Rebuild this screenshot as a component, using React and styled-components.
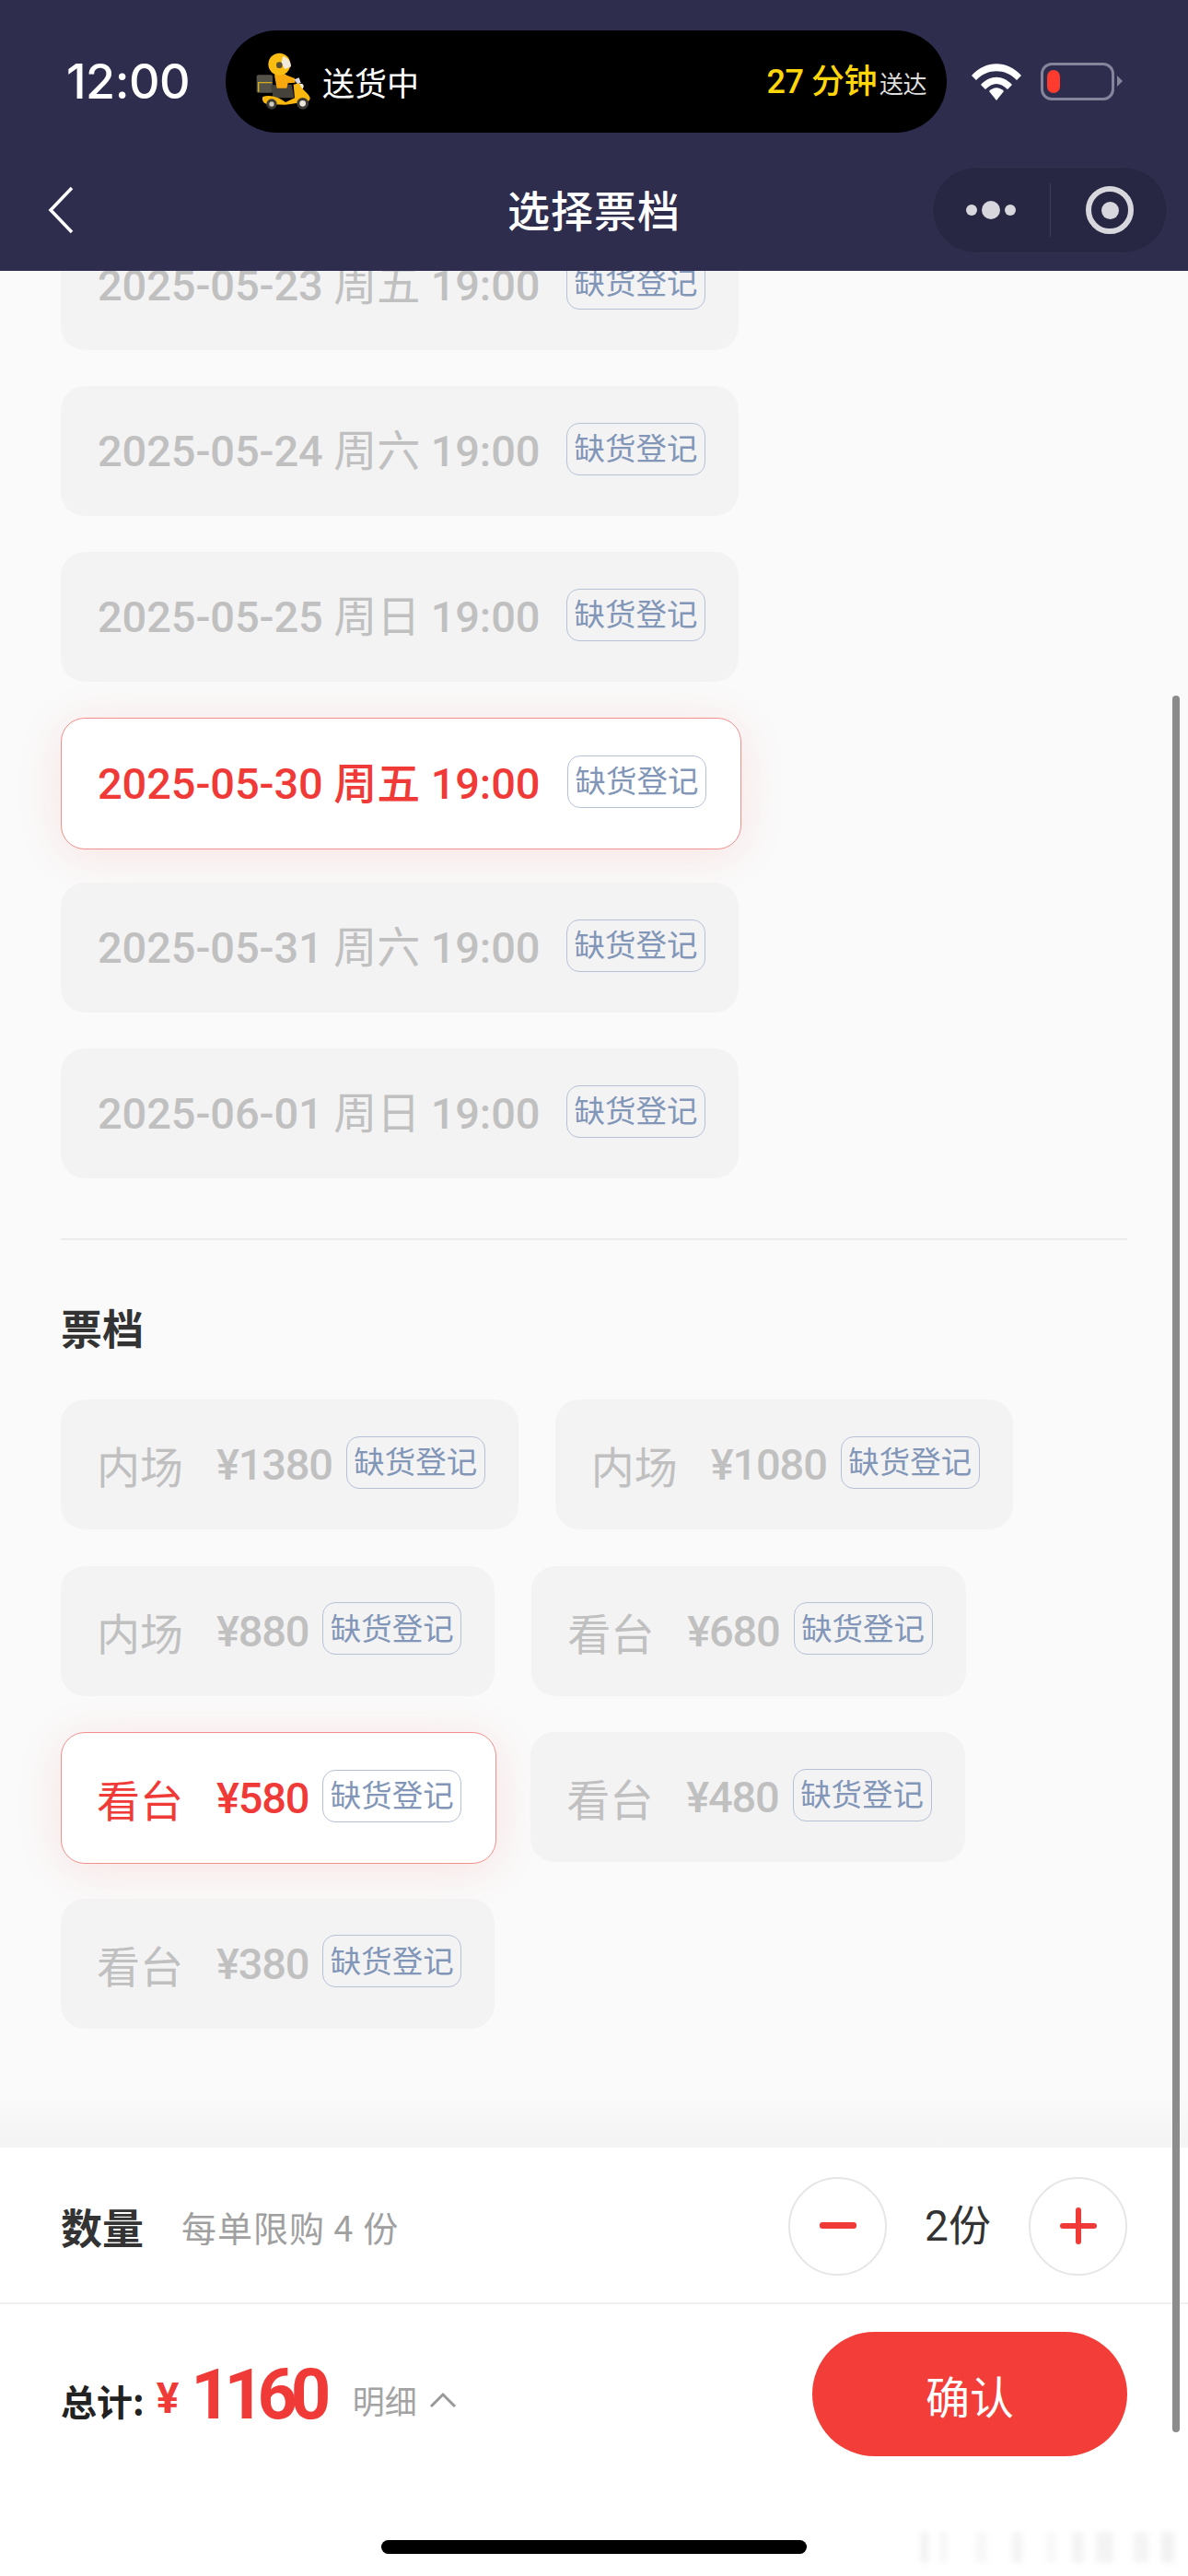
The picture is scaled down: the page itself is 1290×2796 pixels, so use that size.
import React from "react";
import styled, { createGlobalStyle } from "styled-components";

const RED = "#f03a37";

const dates = [
  { date: "2025-05-23", day: "周五" },
  { date: "2025-05-24", day: "周六" },
  { date: "2025-05-25", day: "周日" },
  { date: "2025-05-30", day: "周五", active: true },
  { date: "2025-05-31", day: "周六" },
  { date: "2025-06-01", day: "周日" },
];

const tickets = [
  { area: "内场", price: "¥1380" },
  { area: "内场", price: "¥1080" },
  { area: "内场", price: "¥880" },
  { area: "看台", price: "¥680" },
  { area: "看台", price: "¥580", active: true },
  { area: "看台", price: "¥480" },
  { area: "看台", price: "¥380" },
];

// traced at 3x of the 80px crop, so the viewBox is 240
const Scooter = () => (
  <svg width="80" height="80" viewBox="0 0 240 240">
    <rect x="26" y="97" width="52" height="58" rx="5" fill="#55524a" />
    <path d="M30 122 H76 M32 124 V152" stroke="#d4b01c" strokeWidth="4" fill="none" />
    <path d="M72 130 L140 128 L148 172 L80 172 Z" fill="#45423c" />
    <path d="M84 98 C92 88 116 88 124 98 L150 108 L152 122 L128 124 L124 140 L92 140 Z" fill="#f6a80e" />
    <circle cx="100" cy="62" r="36" fill="#fabd12" />
    <path d="M112 36 C128 42 138 54 138 70 L118 78 L106 58 Z" fill="#f2ebdc" />
    <circle cx="100" cy="65" r="10" fill="#5a5030" />
    <path d="M148 112 L164 106 L170 122 L160 128 Z" fill="#d8d6e0" />
    <circle cx="170" cy="134" r="9" fill="#eeeae0" />
    <path d="M46 168 C70 160 100 170 120 186 L150 172 L146 128 L164 124 C176 150 196 156 200 172 C200 186 186 186 160 188 L120 194 L60 192 C48 190 42 178 46 168 Z" fill="#fab80e" />
    <circle cx="75" cy="192" r="17" fill="#3e3b34" />
    <circle cx="75" cy="192" r="8" fill="#cfcabd" />
    <circle cx="176" cy="190" r="19" fill="#3e3b34" />
    <circle cx="176" cy="190" r="10" fill="#ebe7dc" />
  </svg>
);

const App = () => (
  <Page>
    <GlobalStyle />
    <Header>
      <StatusBar>
        <Clock>12:00</Clock>
        <Island>
          <Scooter />
          <IslandText>送货中</IslandText>
          <Eta>
            27 分钟<small>送达</small>
          </Eta>
        </Island>
        <svg width="56" height="42" viewBox="0 0 56 42">
          <path d="M1 14 C16 -3 40 -3 55 14 L50 19 C38 6 18 6 6 19 Z" fill="#fff" />
          <path d="M11 24 C21 13 35 13 45 24 L40 29 C32 21 24 21 16 29 Z" fill="#fff" />
          <path d="M20 31 C25 26 31 26 36 31 L28 41 Z" fill="#fff" />
        </svg>
        <Battery>
          <BatteryFill />
        </Battery>
      </StatusBar>
      <NavBar>
        <svg width="28" height="52" viewBox="0 0 28 52">
          <path d="M26 2 L3 26 L26 50" fill="none" stroke="#fff" strokeWidth="3.5" />
        </svg>
        <Title>选择票档</Title>
        <Capsule>
          <Dots>
            <i />
            <b />
            <i />
          </Dots>
          <Ring />
        </Capsule>
      </NavBar>
    </Header>

    <Content>
      <Scroller>
        <DateList>
          {dates.map(({ date, day, active }) => (
            <DateCard key={date} $active={active}>
              <span>
                {date} <Weekday $active={active}>{day}</Weekday> 19:00
              </span>
              <Tag>缺货登记</Tag>
            </DateCard>
          ))}
        </DateList>
        <Divider />
        <SectionTitle>票档</SectionTitle>
        <TicketGrid>
          {tickets.map(({ area, price, active }) => (
            <TicketCard key={price} $active={active}>
              <Area>{area}</Area>
              <Price>{price}</Price>
              <Tag>缺货登记</Tag>
            </TicketCard>
          ))}
        </TicketGrid>
      </Scroller>
      <Fade />
    </Content>

    <Footer>
      <QtyRow>
        <Strong>数量</Strong>
        <Hint>每单限购 4 份</Hint>
        <Stepper>
          <RoundButton>
            <svg width="40" height="8" viewBox="0 0 40 8">
              <rect width="40" height="7" rx="3" fill={RED} />
            </svg>
          </RoundButton>
          <Count>2份</Count>
          <RoundButton>
            <svg width="40" height="40" viewBox="0 0 40 40">
              <rect y="17" width="40" height="6" rx="3" fill={RED} />
              <rect x="17" width="6" height="40" rx="3" fill={RED} />
            </svg>
          </RoundButton>
        </Stepper>
      </QtyRow>
      <TotalRow>
        <TotalLabel>总计:</TotalLabel>
        <Yen>¥</Yen>
        <Amount>1160</Amount>
        <Detail>明细</Detail>
        <DetailArrow width="30" height="18" viewBox="0 0 30 18">
          <path d="M2 16 L15 3 L28 16" fill="none" stroke="#999" strokeWidth="3" />
        </DetailArrow>
        <Confirm>确认</Confirm>
      </TotalRow>
      <HomeBar />
      <Watermark />
    </Footer>
    <ScrollThumb />
  </Page>
);

const GlobalStyle = createGlobalStyle`
  html, body {
    margin: 0;
    padding: 0;
    background: #fafafa;
  }
  * {
    box-sizing: border-box;
  }
`;

const Page = styled.div`
  position: relative;
  width: 1290px;
  height: 2796px;
  display: flex;
  flex-direction: column;
  overflow: hidden;
  font-family: "Noto Sans CJK SC", Roboto, sans-serif;
`;

const Header = styled.header`
  position: relative;
  z-index: 2;
  flex: none;
  height: 294px;
  background: #2e2d4e;
  color: #fff;
`;

const StatusBar = styled.div`
  height: 181px;
  padding: 33px 0 37px 72px;
  display: flex;
  align-items: center;
`;

const Clock = styled.div`
  width: 173px;
  font: 500 52px/1 Inter, sans-serif;
  letter-spacing: -0.5px;
`;

const Island = styled.div`
  width: 783px;
  height: 111px;
  margin-right: 26px;
  padding: 0 22px 0 25px;
  display: flex;
  align-items: center;
  background: #000;
  border-radius: 56px;
`;

const IslandText = styled.span`
  font-size: 35px;
  font-weight: 400;
`;

const Eta = styled.span`
  margin-left: auto;
  color: #ffd60a;
  font: 500 36px/1 Roboto, "Noto Sans CJK SC", sans-serif;
  letter-spacing: -0.5px;
  small {
    margin-left: 3px;
    color: #ddd;
    font-size: 26px;
    font-weight: 400;
  }
`;

const Battery = styled.div`
  position: relative;
  width: 80px;
  height: 41px;
  margin-left: 20px;
  padding: 5px 4px;
  border: 3px solid #85849b;
  border-radius: 12px;
  &::after {
    content: "";
    position: absolute;
    top: 11px;
    right: -12px;
    border-left: 6px solid #85849b;
    border-top: 6px solid transparent;
    border-bottom: 6px solid transparent;
  }
`;

const BatteryFill = styled.div`
  width: 14px;
  height: 25px;
  background: #ff3b30;
  border-radius: 7px;
`;

const NavBar = styled.div`
  position: relative;
  height: 94px;
  padding: 0 22px 0 52px;
  display: flex;
  align-items: center;
  justify-content: space-between;
`;

const Title = styled.div`
  position: absolute;
  left: 0;
  right: 0;
  top: 12px;
  text-align: center;
  font-size: 46px;
  line-height: 66px;
  font-weight: 500;
  letter-spacing: 1px;
`;

const Capsule = styled.div`
  position: relative;
  z-index: 1;
  width: 256px;
  height: 94px;
  padding-left: 36px;
  display: flex;
  align-items: center;
  background: #272643;
  border: 1px solid #32314f;
  border-radius: 47px;
  &::after {
    content: "";
    position: absolute;
    left: 127px;
    top: 17px;
    bottom: 17px;
    width: 1px;
    background: #3c3b58;
  }
`;

const Dots = styled.div`
  display: flex;
  align-items: center;
  gap: 5px;
  width: 65px;
  i {
    width: 12px;
    height: 12px;
    border-radius: 50%;
    background: #d8d7dd;
  }
  b {
    width: 20px;
    height: 20px;
    border-radius: 50%;
    background: #d8d7dd;
  }
`;

const Ring = styled.div`
  margin-left: 65px;
  width: 52px;
  height: 52px;
  border-radius: 50%;
  border: 6px solid #d8d7dd;
  display: flex;
  align-items: center;
  justify-content: center;
  &::after {
    content: "";
    width: 19px;
    height: 19px;
    border-radius: 50%;
    background: #d8d7dd;
  }
`;

const Content = styled.main`
  position: relative;
  flex: none;
  height: 2037px;
  overflow: hidden;
`;

const Scroller = styled.div`
  margin-top: -55px;
  padding: 0 66px;
`;

const DateList = styled.div`
  display: flex;
  flex-direction: column;
  align-items: flex-start;
  gap: 39px;
`;

const DateCard = styled.div`
  width: ${(p) => (p.$active ? "739px" : "736px")};
  height: ${(p) => (p.$active ? "143px" : "141px")};
  margin-bottom: ${(p) => (p.$active ? "-3px" : "0")};
  padding: 0 ${(p) => (p.$active ? "37px" : "36px")} 0 ${(p) => (p.$active ? "39px" : "40px")};
  display: flex;
  align-items: center;
  justify-content: space-between;
  border-radius: 26px;
  font: 500 47px/1 Roboto, "Noto Sans CJK SC", sans-serif;
  letter-spacing: -0.1px;
  color: ${(p) => (p.$active ? RED : "#c0c0c0")};
  background: ${(p) => (p.$active ? "#fff" : "#f3f3f4")};
  border: ${(p) => (p.$active ? "1.5px solid #f28f8c" : "none")};
  box-shadow: ${(p) => (p.$active ? "0 6px 50px rgba(240, 60, 55, 0.12)" : "none")};
`;

const Weekday = styled.span`
  font-weight: ${(p) => (p.$active ? 500 : 400)};
`;

const Tag = styled.span`
  flex: none;
  width: 151px;
  height: 57px;
  margin-top: -5px;
  padding-bottom: 4px;
  display: flex;
  align-items: center;
  justify-content: center;
  border: 1.5px solid #b6c1d6;
  border-radius: 14px;
  color: #8296b8;
  font: 400 33.5px/1 "Noto Sans CJK SC", sans-serif;
  letter-spacing: 0;
`;

const Divider = styled.div`
  height: 2px;
  margin-top: 65px;
  background: #ececec;
`;

const SectionTitle = styled.h2`
  margin: 67px 0 0;
  font-size: 45px;
  line-height: 56px;
  font-weight: 700;
  color: #333;
`;

const TicketGrid = styled.div`
  margin-top: 50px;
  display: flex;
  flex-wrap: wrap;
  align-items: flex-start;
  gap: 39.5px 40px;
  width: 1100px;
`;

const TicketCard = styled.div`
  height: ${(p) => (p.$active ? "143px" : "141px")};
  margin: 0 ${(p) => (p.$active ? "-3px" : "0")} ${(p) => (p.$active ? "-3px" : "0")} 0;
  padding: 0 ${(p) => (p.$active ? "37px" : "36px")} 0 ${(p) => (p.$active ? "38px" : "39px")};
  display: flex;
  align-items: center;
  border-radius: 26px;
  color: ${(p) => (p.$active ? RED : "#c0c0c0")};
  background: ${(p) => (p.$active ? "#fff" : "#f3f3f4")};
  border: ${(p) => (p.$active ? "1.5px solid #f28f8c" : "none")};
  box-shadow: ${(p) => (p.$active ? "0 6px 50px rgba(240, 60, 55, 0.12)" : "none")};
`;

const Area = styled.span`
  font-size: 47px;
  font-weight: 400;
`;

const Price = styled.span`
  margin: 0 15px 0 36px;
  font: 500 47px/1 Roboto, sans-serif;
  letter-spacing: -1.2px;
`;

const Fade = styled.div`
  position: absolute;
  left: 0;
  right: 0;
  bottom: 0;
  height: 60px;
  background: linear-gradient(rgba(244, 244, 244, 0), #f4f4f4);
`;

const Footer = styled.footer`
  position: relative;
  flex: 1;
  background: #fff;
`;

const QtyRow = styled.div`
  height: 170px;
  padding: 2px 66px 0;
  display: flex;
  align-items: center;
  border-bottom: 2px solid #f0f0f0;
`;

const Strong = styled.span`
  font-size: 45px;
  font-weight: 700;
  color: #333;
`;

const Hint = styled.span`
  margin-left: 41px;
  font-size: 38px;
  color: #a0a0a0;
  letter-spacing: 1px;
`;

const Stepper = styled.div`
  margin-left: auto;
  display: flex;
  align-items: center;
`;

const RoundButton = styled.div`
  width: 107px;
  height: 107px;
  display: flex;
  align-items: center;
  justify-content: center;
  border: 2px solid #e6e6e6;
  border-radius: 50%;
`;

const Count = styled.span`
  width: 154px;
  text-align: center;
  font: 400 46px/1 Roboto, "Noto Sans CJK SC", sans-serif;
  color: #333;
`;

const TotalRow = styled.div`
  height: 195px;
  padding: 0 66px;
  display: flex;
  align-items: center;
`;

const TotalLabel = styled.span`
  margin-top: 12px;
  font-size: 39px;
  font-weight: 700;
  color: #222;
`;

const Yen = styled.span`
  margin: 8px 0 0 13px;
  color: ${RED};
  font: 700 46px/1 Roboto, sans-serif;
`;

const Amount = styled.span`
  margin: 0 0 0 13px;
  color: ${RED};
  font: 700 76px/1 Roboto, sans-serif;
  letter-spacing: -7.5px;
`;

const Detail = styled.span`
  margin: 12px 13px 0 31px;
  color: #a3a3a3;
  font-size: 35px;
`;

const DetailArrow = styled.svg`
  margin-top: 12px;
`;

const Confirm = styled.div`
  margin-left: auto;
  width: 342px;
  height: 135px;
  display: flex;
  align-items: center;
  justify-content: center;
  background: #f33d38;
  border-radius: 68px;
  color: #fff;
  font-size: 48px;
`;

const HomeBar = styled.div`
  position: absolute;
  left: 414px;
  bottom: 24px;
  width: 462px;
  height: 15px;
  background: #000;
  border-radius: 8px;
`;

const Watermark = styled.div`
  position: absolute;
  left: 1000px;
  bottom: 14px;
  width: 275px;
  height: 34px;
  filter: blur(3px);
  opacity: 0.45;
  background: linear-gradient(
    90deg,
    #e0e0e0 0 3%,
    #fff 3% 8%,
    #e4e4e4 8% 10%,
    #fff 10% 22%,
    #eee 22% 26%,
    #fff 26% 36%,
    #e8e8e8 36% 40%,
    #fff 40% 50%,
    #eee 50% 53%,
    #fff 53% 60%,
    #e4e4e4 60% 64%,
    #fff 64% 69%,
    #e6e6e6 69% 76%,
    #fff 76% 84%,
    #e8e8e8 84% 90%,
    #fff 90% 95%,
    #e2e2e2 95% 100%
  );
`;

const ScrollThumb = styled.div`
  position: absolute;
  z-index: 3;
  top: 755px;
  right: 9px;
  width: 8px;
  height: 1885px;
  border-radius: 4px;
  background: #8c8c8c;
`;

export default App;
